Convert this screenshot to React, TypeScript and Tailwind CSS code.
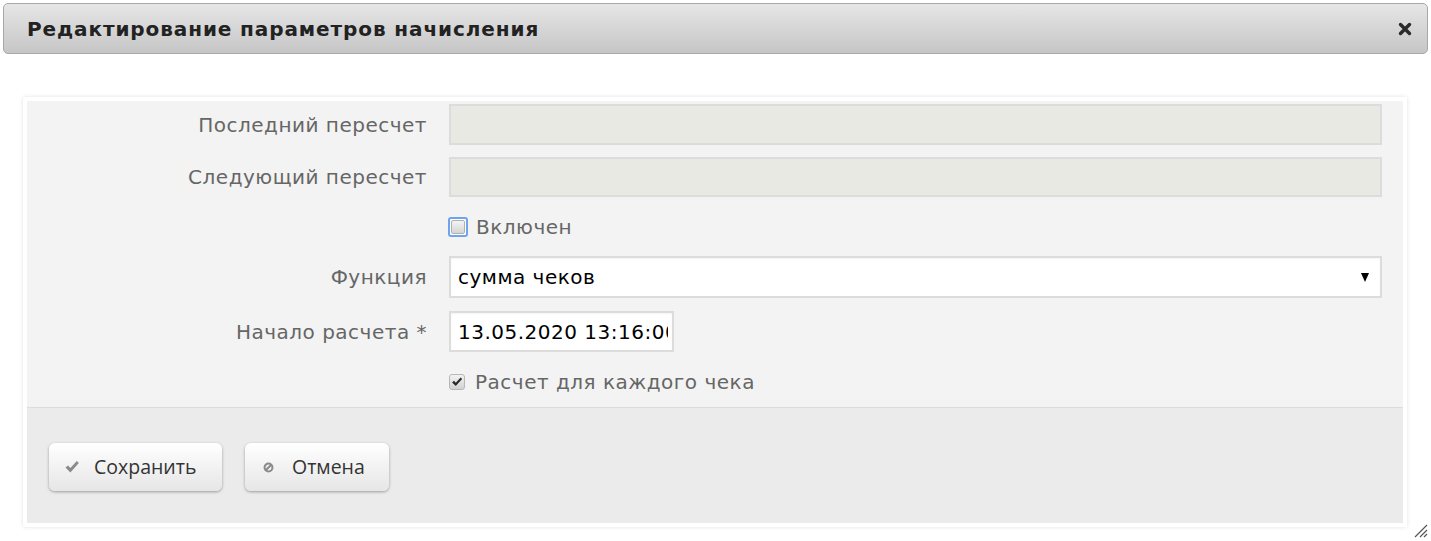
import React from 'react';

const font = { fontFamily: '"DejaVu Sans", Verdana, sans-serif' };

const Label = ({ children }: { children: React.ReactNode }) => (
  <div className="w-[400px] shrink-0 text-right text-[20px] tracking-[0.5px] text-[#666666] leading-none">{children}</div>
);

const Row = ({ label, className, children }: { label?: React.ReactNode; className?: string; children: React.ReactNode }) => (
  <div className={`flex items-center gap-x-[22px] ${className ?? ''}`}>
    <Label>{label}</Label>
    {children}
  </div>
);

// heavy tick, like the ✔ glyph
const CheckIcon = ({ className }: { className?: string }) => (
  <svg viewBox="0 0 16 16" className={className}>
    <path d="M1.5 8.6 L4 6.4 L6.4 9 L12.8 2 L14.8 4 L6.4 13.4 Z" fill="currentColor" />
  </svg>
);

export default function App() {
  return (
    <div className="w-[1431px] h-[541px] bg-white relative overflow-hidden" style={font}>
      {/* title bar */}
      <div className="mx-[3px] mt-[3px] h-[51px] rounded-[5px] border border-[#a8a8a8] bg-gradient-to-b from-[#e6e6e6] to-[#c6c6c6] flex items-center justify-between pl-[23px] pr-[15px]">
        <span className="text-[20px] font-bold text-[#222222] tracking-[0.9px]">Редактирование параметров начисления</span>
        <svg viewBox="0 0 14 14" className="w-[14px] h-[14px] text-[#2a2a2a]">
          <path d="M2.5 2.5 L11.5 11.5 M11.5 2.5 L2.5 11.5" stroke="currentColor" strokeWidth="3.4" strokeLinecap="round" />
        </svg>
      </div>

      {/* form panel */}
      <div className="ml-[23px] mt-[43px] w-[1384px] border-[4px] border-white shadow-[0_0_4px_rgba(0,0,0,0.12)]">
        <div className="bg-[#f3f3f3] pt-[3px] pb-[7px]">
          <Row label="Последний пересчет">
            <div className="w-[933px] h-[41px] border-2 border-[#dcdcdc] bg-[#e9e9e3]" />
          </Row>
          <Row label="Следующий пересчет" className="mt-[12px]">
            <div className="w-[933px] h-[40px] border-2 border-[#dcdcdc] bg-[#e9e9e3]" />
          </Row>
          <Row className="mt-[12px] h-[36px]">
            <div className="flex items-center gap-[8px] -ml-[1px]">
              <span className="w-[20px] h-[20px] rounded-[3px] border-2 border-[#6fa3f0] flex items-center justify-center bg-white">
                <span className="w-[14px] h-[14px] rounded-[2px] border border-[#b0b0b0] bg-gradient-to-b from-[#f4f4f4] to-[#d4d4d4]" />
              </span>
              <span className="text-[20px] tracking-[0.5px] text-[#666666]">Включен</span>
            </div>
          </Row>
          <Row label="Функция" className="mt-[11px]">
            <div className="w-[933px] h-[42px] border-2 border-[#dcdcdc] bg-white flex items-center justify-between pl-[7px] pr-[11px] shadow-[inset_0_1px_2px_rgba(0,0,0,0.05)]">
              <span className="text-[20px] tracking-[0.5px] text-black">сумма чеков</span>
              <span className="w-0 h-0 border-l-[4px] border-r-[4px] border-t-[9px] border-l-transparent border-r-transparent border-t-black" />
            </div>
          </Row>
          <Row label="Начало расчета *" className="mt-[13px]">
            <div className="w-[225px] h-[41px] border-2 border-[#dcdcdc] bg-white flex items-center pl-[7px] pr-[4px] overflow-hidden shadow-[inset_0_1px_2px_rgba(0,0,0,0.05)]">
              <span className="text-[20px] tracking-[0.5px] text-black whitespace-nowrap overflow-hidden">13.05.2020 13:16:00</span>
            </div>
          </Row>
          <Row className="mt-[12px] h-[36px]">
            <div className="flex items-center gap-[10px]">
              <span className="w-[16px] h-[16px] rounded-[3px] border border-[#b8b8b8] bg-gradient-to-b from-[#f2f2f2] to-[#d2d2d2] flex items-center justify-center text-[#2a2a2a]">
                <CheckIcon className="w-[12px] h-[12px]" />
              </span>
              <span className="text-[20px] tracking-[0.5px] text-[#666666]">Расчет для каждого чека</span>
            </div>
          </Row>
        </div>

        {/* footer */}
        <div className="border-t border-[#dcdcdc] bg-[#ebebeb] pl-[22px] pt-[35px] pb-[32px] flex gap-[23px]">
          <button className="w-[173px] h-[48px] rounded-[6px] bg-gradient-to-b from-white to-[#e6e6e6] shadow-[0_1px_3px_rgba(0,0,0,0.35)] flex items-center pl-[15px] gap-[14px] text-[19.5px] text-[#333333]" style={{ fontFamily: '"Open Sans", sans-serif' }}>
            <CheckIcon className="w-[16px] h-[16px] text-[#8a8a8a]" />
            <span>Сохранить</span>
          </button>
          <button className="w-[144px] h-[48px] rounded-[6px] bg-gradient-to-b from-white to-[#e6e6e6] shadow-[0_1px_3px_rgba(0,0,0,0.35)] flex items-center pl-[18px] gap-[18px] text-[19.5px] text-[#333333]" style={{ fontFamily: '"Open Sans", sans-serif' }}>
            <svg viewBox="0 0 12 12" className="w-[11px] h-[11px] text-[#8a8a8a]">
              <circle cx="6" cy="6" r="4.3" fill="none" stroke="currentColor" strokeWidth="2.2" />
              <path d="M3.2 8.8 L8.8 3.2" stroke="currentColor" strokeWidth="2.2" />
            </svg>
            <span>Отмена</span>
          </button>
        </div>
      </div>

      {/* resize grip */}
      <svg viewBox="0 0 16 16" className="absolute right-[3px] bottom-[3px] w-[16px] h-[16px] text-[#555555]">
        <path d="M15 3 L3 15 M15 8 L8 15 M15 12 L12 15" stroke="currentColor" strokeWidth="1.2" />
      </svg>
    </div>
  );
}
